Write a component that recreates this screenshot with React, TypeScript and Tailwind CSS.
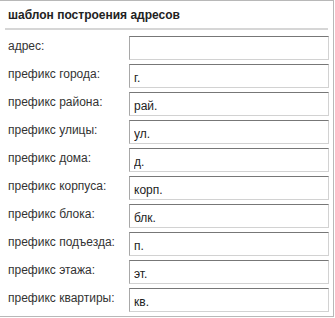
const rows = [
  { label: 'адрес:', value: '' },
  { label: 'префикс города:', value: 'г.' },
  { label: 'префикс района:', value: 'рай.' },
  { label: 'префикс улицы:', value: 'ул.' },
  { label: 'префикс дома:', value: 'д.' },
  { label: 'префикс корпуса:', value: 'корп.' },
  { label: 'префикс блока:', value: 'блк.' },
  { label: 'префикс подъезда:', value: 'п.' },
  { label: 'префикс этажа:', value: 'эт.' },
  { label: 'префикс квартиры:', value: 'кв.' },
]

export default function App() {
  return (
    <div
      className="w-[334px] h-[317px] bg-white border-t border-r border-b border-[#b8b8b8] text-[12px] text-[#333]"
      style={{ fontFamily: '"Liberation Sans", Arial, sans-serif' }}
    >
      {/* заголовок */}
      <div className="mx-[5px] mr-[5px] h-[29px] border-b-2 border-[#d6d6d6] flex items-center pl-[3px]">
        <span className="font-bold text-[#222]">шаблон построения адресов</span>
      </div>

      {/* поля */}
      <div className="flex flex-col gap-[4px] pt-[6px] pl-[8px]">
        {rows.map((row, i) => (
          <div key={i} className="flex items-center h-[24px]">
            <label className="w-[121px] -mt-[4px]">{row.label}</label>
            <input
              className="w-[200px] h-[24px] border border-t-[#777] border-l-[#a8a8a8] border-r-[#d2d2d2] border-b-[#d2d2d2] bg-white px-[4px] pt-[3px] text-[12px] text-[#222] outline-none"
              defaultValue={row.value}
            />
          </div>
        ))}
      </div>
    </div>
  )
}
